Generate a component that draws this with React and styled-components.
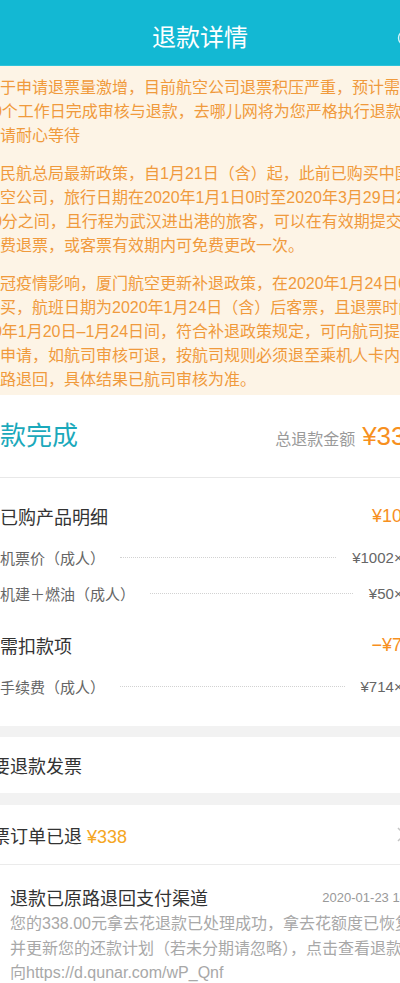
import React from "react";
import styled, { createGlobalStyle } from "styled-components";

const Global = createGlobalStyle`
  html, body { margin: 0; padding: 0; background: #fff; }
  body { font-family: "Liberation Sans", "Noto Sans CJK SC", sans-serif; }
`;

const Viewport = styled.div`
  width: 400px;
  height: 983px;
  overflow: hidden;
  background: #fff;
`;

const Canvas = styled.div`
  width: 460px;
  margin-left: -30px;
  display: flex;
  flex-direction: column;
`;

const TopBar = styled.header`
  height: 66px;
  box-sizing: border-box;
  padding-top: 10px;
  background: #13b8d3;
  border-bottom: 1px solid #2fc3da;
  display: grid;
  grid-template-columns: 1fr auto 1fr;
  align-items: center;
`;

const Title = styled.h1`
  margin: 0;
  grid-column: 2;
  font-size: 24px;
  font-weight: 400;
  line-height: 1;
  color: #fff;
`;

const BarAction = styled.div`
  justify-self: end;
  padding-right: 15px;
  display: flex;
`;

const Notice = styled.section`
  background: #fdf4e6;
  padding: 10px 0 3px 14px;
  display: flex;
  flex-direction: column;
  gap: 14px;
  color: #f09a3c;
  font-size: 16px;
  line-height: 24px;
`;

const Para = styled.div``;

const Line = styled.div`
  white-space: nowrap;
`;

const Status = styled.section`
  height: 82px;
  display: flex;
  align-items: center;
  justify-content: space-between;
  padding: 0 10px 0 4px;
  border-bottom: 1px solid #e8e8e8;
`;

const StatusTitle = styled.div`
  font-size: 26px;
  color: #1ba9bb;
  line-height: 1;
`;

const Total = styled.div`
  display: flex;
  align-items: baseline;
  gap: 7px;
  white-space: nowrap;
`;

const TotalLabel = styled.span`
  font-size: 16px;
  color: #9a9a9a;
`;

const TotalAmount = styled.span`
  font-size: 26px;
  color: #f7901e;
`;

const Details = styled.section`
  padding: 20px 8px 22px 30px;
  display: flex;
  flex-direction: column;
  gap: 16px;
`;

const Group = styled.div`
  display: flex;
  flex-direction: column;
`;

const GroupHead = styled.div`
  height: 36px;
  margin-bottom: 5px;
  display: flex;
  align-items: center;
  justify-content: space-between;
  font-size: 18px;
  color: #333;
  white-space: nowrap;
`;

const HeadAmount = styled.span`
  color: #f7901e;
`;

const ItemRow = styled.div`
  height: 36px;
  padding-right: 11px;
  display: flex;
  align-items: center;
  font-size: 15px;
  color: #666;
  white-space: nowrap;
`;

const Dots = styled.span`
  flex: 1;
  margin: 0 16px 0 15px;
  border-top: 1px dotted #d2d2d2;
`;

const Band = styled.div`
  height: ${(p) => p.$h}px;
  background: #f2f2f2;
`;

const PlainRow = styled.div`
  height: ${(p) => p.$h}px;
  padding-left: 4px;
  display: flex;
  align-items: center;
  justify-content: space-between;
  font-size: 18px;
  color: #333;
  white-space: nowrap;
  border-bottom: ${(p) => (p.$divider ? "1px solid #ebebeb" : "none")};
`;

const Refunded = styled.span`
  margin-left: 5px;
  color: #f5a623;
`;

const Chevron = styled.svg`
  margin-right: 24px;
`;

const Timeline = styled.section`
  padding: 19px 5px 0 40px;
`;

const TimelineHead = styled.div`
  height: 26px;
  display: flex;
  align-items: center;
  justify-content: space-between;
  white-space: nowrap;
`;

const EventTitle = styled.span`
  font-size: 18px;
  color: #333;
`;

const EventDate = styled.span`
  font-size: 13px;
  color: #999;
`;

const EventBody = styled.div`
  margin-top: 2px;
  font-size: 16px;
  line-height: 24.5px;
  color: #a8a8a8;
`;

export default function App() {
  return (
    <Viewport>
      <Global />
      <Canvas>
        <TopBar>
          <Title>退款详情</Title>
          <BarAction>
            <svg width="18" height="18" viewBox="0 0 18 18">
              <circle cx="9" cy="9" r="7.5" fill="none" stroke="#fff" strokeWidth="1.4" opacity="0.85" />
            </svg>
          </BarAction>
        </TopBar>

        <Notice>
          <Para>
            <Line>由于申请退票量激增，目前航空公司退票积压严重，预计需要</Line>
            <Line>20个工作日完成审核与退款，去哪儿网将为您严格执行退款流</Line>
            <Line>，请耐心等待</Line>
          </Para>
          <Para>
            <Line>据民航总局最新政策，自1月21日（含）起，此前已购买中国航</Line>
            <Line>航空公司，旅行日期在2020年1月1日0时至2020年3月29日24</Line>
            <Line>00分之间，且行程为武汉进出港的旅客，可以在有效期提交免</Line>
            <Line>免费退票，或客票有效期内可免费更改一次。</Line>
          </Para>
          <Para>
            <Line>新冠疫情影响，厦门航空更新补退政策，在2020年1月24日0时</Line>
            <Line>购买，航班日期为2020年1月24日（含）后客票，且退票时间为</Line>
            <Line>20年1月20日–1月24日间，符合补退政策规定，可向航司提交</Line>
            <Line>出申请，如航司审核可退，按航司规则必须退至乘机人卡内或原</Line>
            <Line>原路退回，具体结果已航司审核为准。</Line>
          </Para>
        </Notice>

        <Status>
          <StatusTitle>退款完成</StatusTitle>
          <Total>
            <TotalLabel>总退款金额</TotalLabel>
            <TotalAmount>¥338</TotalAmount>
          </Total>
        </Status>

        <Details>
          <Group>
            <GroupHead>
              <span>已购产品明细</span>
              <HeadAmount>¥1052</HeadAmount>
            </GroupHead>
            <ItemRow>
              <span>机票价（成人）</span>
              <Dots />
              <span>¥1002×1</span>
            </ItemRow>
            <ItemRow>
              <span>机建＋燃油（成人）</span>
              <Dots />
              <span>¥50×1</span>
            </ItemRow>
          </Group>
          <Group>
            <GroupHead>
              <span>需扣款项</span>
              <HeadAmount>−¥714</HeadAmount>
            </GroupHead>
            <ItemRow>
              <span>手续费（成人）</span>
              <Dots />
              <span>¥714×1</span>
            </ItemRow>
          </Group>
        </Details>

        <Band $h={11} />
        <PlainRow $h={56}>
          <span>需要退款发票</span>
        </PlainRow>
        <Band $h={12} />
        <PlainRow $h={59} $divider>
          <span>
            机票订单已退<Refunded>¥338</Refunded>
          </span>
          <Chevron width="9" height="15" viewBox="0 0 9 15">
            <path d="M1 1l6.5 6.5L1 14" fill="none" stroke="#c4c4c4" strokeWidth="1.5" />
          </Chevron>
        </PlainRow>

        <Timeline>
          <TimelineHead>
            <EventTitle>退款已原路退回支付渠道</EventTitle>
            <EventDate>2020-01-23 14:35</EventDate>
          </TimelineHead>
          <EventBody>
            <Line>您的338.00元拿去花退款已处理成功，拿去花额度已恢复，</Line>
            <Line>并更新您的还款计划（若未分期请忽略），点击查看退款去</Line>
            <Line>向https://d.qunar.com/wP_Qnf</Line>
          </EventBody>
        </Timeline>
      </Canvas>
    </Viewport>
  );
}
